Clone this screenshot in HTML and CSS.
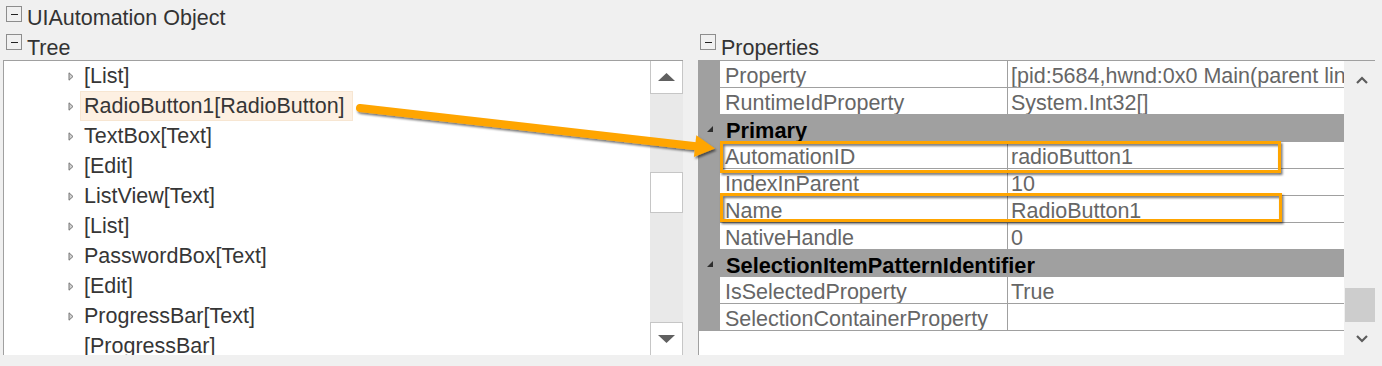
FILE: index.html
```html
<!DOCTYPE html>
<html lang="en">
<head>
<meta charset="utf-8">
<title>UIAutomation Object</title>
<link rel="stylesheet" href="styles.css">
</head>
<body>
<div class="app">
  <div class="title-row">
    <span class="toggle"></span>
    <span class="head-text">UIAutomation Object</span>
  </div>
  <div class="columns">
    <section class="tree-col">
      <div class="sec-head">
        <span class="toggle"></span>
        <span class="head-text">Tree</span>
      </div>
      <div class="tree-panel">
        <ul class="tree-list">
          <li class="tree-item"><svg class="exp" viewBox="0 0 6 9"><path d="M1 0.8 L5 4.5 L1 8.2 Z"/></svg><span class="tree-label">[List]</span></li>
          <li class="tree-item"><svg class="exp" viewBox="0 0 6 9"><path d="M1 0.8 L5 4.5 L1 8.2 Z"/></svg><span class="tree-label selected">RadioButton1[RadioButton]</span></li>
          <li class="tree-item"><svg class="exp" viewBox="0 0 6 9"><path d="M1 0.8 L5 4.5 L1 8.2 Z"/></svg><span class="tree-label">TextBox[Text]</span></li>
          <li class="tree-item"><svg class="exp" viewBox="0 0 6 9"><path d="M1 0.8 L5 4.5 L1 8.2 Z"/></svg><span class="tree-label">[Edit]</span></li>
          <li class="tree-item"><svg class="exp" viewBox="0 0 6 9"><path d="M1 0.8 L5 4.5 L1 8.2 Z"/></svg><span class="tree-label">ListView[Text]</span></li>
          <li class="tree-item"><svg class="exp" viewBox="0 0 6 9"><path d="M1 0.8 L5 4.5 L1 8.2 Z"/></svg><span class="tree-label">[List]</span></li>
          <li class="tree-item"><svg class="exp" viewBox="0 0 6 9"><path d="M1 0.8 L5 4.5 L1 8.2 Z"/></svg><span class="tree-label">PasswordBox[Text]</span></li>
          <li class="tree-item"><svg class="exp" viewBox="0 0 6 9"><path d="M1 0.8 L5 4.5 L1 8.2 Z"/></svg><span class="tree-label">[Edit]</span></li>
          <li class="tree-item"><svg class="exp" viewBox="0 0 6 9"><path d="M1 0.8 L5 4.5 L1 8.2 Z"/></svg><span class="tree-label">ProgressBar[Text]</span></li>
          <li class="tree-item"><span class="exp"></span><span class="tree-label">[ProgressBar]</span></li>
        </ul>
        <div class="vscroll">
          <div class="sb-btn sb-up"><svg width="17" height="8" viewBox="0 0 17 8"><path d="M8.5 0 L17 8 L0 8 Z"/></svg></div>
          <div class="sb-thumb"></div>
          <div class="sb-btn sb-down"><svg width="17" height="8" viewBox="0 0 17 8"><path d="M0 0 L17 0 L8.5 8 Z"/></svg></div>
        </div>
      </div>
    </section>
    <section class="prop-col">
      <div class="sec-head">
        <span class="toggle"></span>
        <span class="head-text">Properties</span>
      </div>
      <div class="prop-panel">
        <div class="grid">
          <div class="row"><div class="gutter"></div><div class="name">Property</div><div class="val">[pid:5684,hwnd:0x0 Main(parent link:[pid:5684,hwnd:0x0])]</div></div>
          <div class="row"><div class="gutter"></div><div class="name">RuntimeIdProperty</div><div class="val">System.Int32[]</div></div>
          <div class="row cat"><div class="gutter"><svg class="cat-exp" viewBox="0 0 6 6"><path d="M6 0 L6 6 L0 6 Z"/></svg></div><div class="name">Primary</div></div>
          <div class="row"><div class="gutter"></div><div class="name">AutomationID</div><div class="val">radioButton1</div></div>
          <div class="row"><div class="gutter"></div><div class="name">IndexInParent</div><div class="val">10</div></div>
          <div class="row"><div class="gutter"></div><div class="name">Name</div><div class="val">RadioButton1</div></div>
          <div class="row"><div class="gutter"></div><div class="name">NativeHandle</div><div class="val">0</div></div>
          <div class="row cat"><div class="gutter"><svg class="cat-exp" viewBox="0 0 6 6"><path d="M6 0 L6 6 L0 6 Z"/></svg></div><div class="name">SelectionItemPatternIdentifier</div></div>
          <div class="row"><div class="gutter"></div><div class="name">IsSelectedProperty</div><div class="val">True</div></div>
          <div class="row"><div class="gutter"></div><div class="name">SelectionContainerProperty</div><div class="val"></div></div>
        </div>
        <div class="pscroll">
          <div class="ps-arrow ps-up"><svg width="12" height="8" viewBox="0 0 12 8"><path d="M1 7 L6 2 L11 7"/></svg></div>
          <div class="ps-thumb"></div>
          <div class="ps-arrow ps-down"><svg width="12" height="8" viewBox="0 0 12 8"><path d="M1 1 L6 6 L11 1"/></svg></div>
        </div>
      </div>
    </section>
  </div>
</div>
<svg class="annot" width="1382" height="366" viewBox="0 0 1382 366">
  <defs>
    <filter id="sh" x="-10%" y="-60%" width="120%" height="220%">
      <feDropShadow dx="1.5" dy="2" stdDeviation="1.2" flood-color="#000" flood-opacity="0.55"/>
    </filter>
  </defs>
  <g filter="url(#sh)">
    <line x1="360" y1="108" x2="698" y2="146.5" stroke="#ffa500" stroke-width="8" stroke-linecap="round"/>
    <polygon points="715,148.5 696.3,135.3 693.9,157.1" fill="#ffa500"/>
  </g>
  <rect x="721.5" y="142.5" width="558" height="29" fill="none" stroke="#ffa500" stroke-width="3" filter="url(#sh)"/>
  <rect x="721.5" y="194.5" width="559" height="26" fill="none" stroke="#ffa500" stroke-width="3" filter="url(#sh)"/>
</svg>
</body>
</html>
```

FILE: styles.css
```css
* { box-sizing: border-box; }
html, body { margin: 0; padding: 0; }
body {
  position: relative;
  width: 1382px;
  height: 366px;
  overflow: hidden;
  background: #f0f0f0;
  font-family: "Liberation Sans", Arial, sans-serif;
  font-size: 21.5px;
  color: #333;
}

.title-row { display: flex; height: 32px; padding-left: 6px; }
.toggle {
  flex: none;
  width: 16px;
  height: 16px;
  border: 1px solid #8d8d8d;
  display: flex;
  align-items: center;
  justify-content: center;
}
.toggle::before { content: ""; width: 7px; height: 1px; background: #222; }
.title-row .toggle { margin-top: 6px; }
.head-text { margin-left: 5px; line-height: 24px; white-space: nowrap; color: #333; }
.title-row .head-text { padding-top: 6px; }

.columns { display: flex; height: 334px; }
.tree-col { flex: none; width: 698px; }
.prop-col { flex: 1; }

.sec-head { display: flex; height: 28px; }
.tree-col .sec-head { padding-left: 6px; }
.prop-col .sec-head { padding-left: 2px; }
.sec-head .toggle { margin-top: 2px; }
.sec-head .head-text { padding-top: 4px; }

/* tree */
.tree-panel {
  margin-left: 3px;
  width: 680px;
  height: 295px;
  border-top: 1px solid #a0a0a0;
  border-left: 1px solid #a0a0a0;
  background: #fff;
  display: flex;
  overflow: hidden;
}
.tree-list { flex: 1; list-style: none; margin: 0; padding: 0; color: #363636; }
.tree-item { display: flex; align-items: center; height: 30px; padding-left: 64px; }
.exp { flex: none; width: 6px; height: 9px; }
.exp path { fill: #d0d0d0; stroke: #777; stroke-width: 1; }
.tree-label {
  margin-left: 6px;
  height: 30px;
  padding: 1px 7px 0 3px;
  line-height: 26px;
  white-space: nowrap;
  border: 1px solid transparent;
}
.tree-label.selected { background: #fdf0e2; border-color: #f7e6d2; }

.vscroll {
  flex: none;
  width: 33px;
  background: #e9e9e9;
  display: flex;
  flex-direction: column;
}
.sb-btn {
  flex: none;
  height: 33px;
  background: #fff;
  border: 1px solid #c6c6c6;
  display: flex;
  align-items: center;
  justify-content: center;
}
.sb-btn path { fill: #606060; }
.sb-up { border-top: none; }
.sb-down { margin-top: auto; border-bottom: none; }
.sb-thumb { flex: none; height: 41px; margin-top: 78px; background: #fff; border: 1px solid #c6c6c6; }

/* properties */
.prop-panel {
  width: 677px;
  height: 295px;
  border-top: 1px solid #a0a0a0;
  border-left: 1px solid #a0a0a0;
  display: flex;
}
.grid { flex: none; width: 645px; background: #fff; color: #666; }
.row { display: flex; height: 27px; border-bottom: 1px solid #a0a0a0; }
.gutter { flex: none; width: 21px; background: #a0a0a0; }
.name {
  flex: none;
  width: 287px;
  padding: 4px 0 0 5px;
  line-height: 23px;
  white-space: nowrap;
  overflow: hidden;
}
.val {
  flex: 1;
  min-width: 0;
  border-left: 1px solid #a0a0a0;
  padding: 4px 0 0 3px;
  line-height: 23px;
  white-space: nowrap;
  overflow: hidden;
}
.cat { background: #a0a0a0; color: #000; font-weight: bold; font-size: 21.8px; }
.cat .gutter { padding: 11px 0 0 8px; }
.cat .name { flex: 1; width: auto; padding-left: 6px; overflow: visible; }
.cat-exp { display: block; width: 6px; height: 6px; }
.cat-exp path { fill: #2e2e2e; }

.pscroll { flex: none; width: 31px; display: flex; flex-direction: column; }
.ps-arrow { flex: none; display: flex; align-items: center; justify-content: center; padding-left: 4px; }
.ps-arrow path { fill: none; stroke: #5c5c5c; stroke-width: 2.2; }
.ps-up { height: 38px; }
.ps-thumb { flex: none; height: 34px; margin-top: 189px; margin-left: 1px; background: #cdcdcd; }
.ps-down { height: 33px; }

.annot { position: absolute; left: 0; top: 0; pointer-events: none; }
```
